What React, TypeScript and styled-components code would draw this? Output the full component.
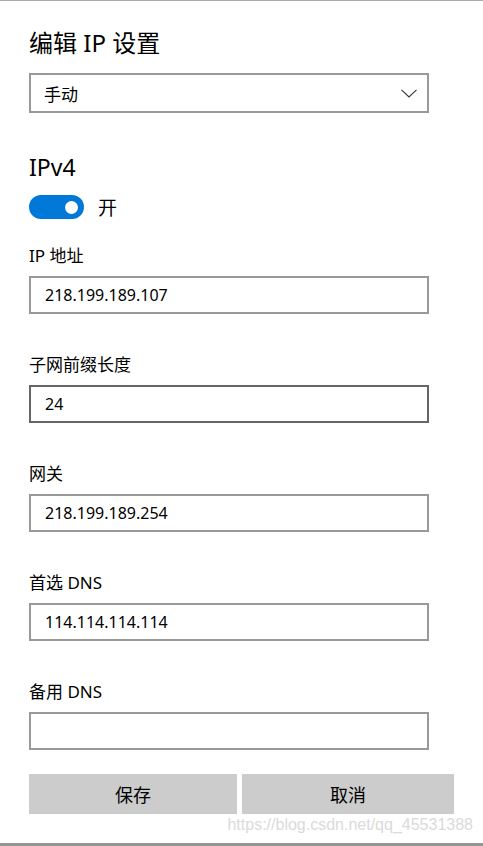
import React from 'react'
import styled, { createGlobalStyle } from 'styled-components'

const GlobalStyle = createGlobalStyle`
	html, body {
		margin: 0;
		padding: 0;
		background: #fff;
		overflow: hidden;
	}
`

const Page = styled.div`
	position: relative;
	box-sizing: border-box;
	width: 483px;
	height: 846px;
	padding: 26px 0 0 29px;
	border-top: 1px solid #ababab;
	border-bottom: 3px solid #959595;
	background: #fff;
	color: #000;
	font-family: 'Noto Sans', 'Noto Sans CJK SC', sans-serif;
`

const Title = styled.h1`
	margin: 0;
	font-size: 24px;
	line-height: 32px;
	font-weight: 400;
`

const Select = styled.div`
	display: flex;
	align-items: center;
	justify-content: space-between;
	box-sizing: border-box;
	width: 400px;
	height: 40px;
	margin-top: 14px;
	padding: 0 10px 0 13px;
	border: 2px solid #999;
	font-size: 17px;
`

const Heading = styled.h2`
	margin: 39px 0 0;
	font-size: 23px;
	line-height: 30px;
	font-weight: 400;
`

const ToggleRow = styled.div`
	display: flex;
	align-items: center;
	gap: 14px;
	height: 24px;
	margin-top: 13px;
	font-size: 19px;
`

const Toggle = styled.div<{ $on: boolean }>`
	display: flex;
	align-items: center;
	justify-content: ${(p) => (p.$on ? 'flex-end' : 'flex-start')};
	box-sizing: border-box;
	width: 55px;
	height: 24px;
	padding: 0 6px;
	border-radius: 12px;
	background: ${(p) => (p.$on ? '#0078d7' : '#fff')};
`

const Knob = styled.span`
	width: 13px;
	height: 13px;
	border-radius: 50%;
	background: #fff;
`

const Fields = styled.div`
	display: flex;
	flex-direction: column;
	gap: 39px;
	margin-top: 25px;
`

const Field = styled.div`
	display: flex;
	flex-direction: column;
	gap: 8px;
`

const Label = styled.label`
	font-size: 17px;
	line-height: 24px;
`

const Input = styled.input<{ $active?: boolean }>`
	box-sizing: border-box;
	width: 400px;
	height: 38px;
	margin: 0;
	padding: 0 14px;
	border: 2px solid ${(p) => (p.$active ? '#666' : '#999')};
	border-radius: 0;
	outline: none;
	background: #fff;
	color: #000;
	font: inherit;
	font-size: 16px;
`

const Buttons = styled.div`
	display: grid;
	grid-template-columns: 208px 212px;
	gap: 5px;
	margin-top: 24px;
`

const Button = styled.button`
	height: 40px;
	margin: 0;
	padding: 0;
	border: none;
	background: #ccc;
	color: #000;
	font: inherit;
	font-size: 18px;
`

const Watermark = styled.div`
	position: absolute;
	right: 10px;
	bottom: 9px;
	font-family: 'Liberation Sans', Arial, sans-serif;
	font-size: 16px;
	line-height: 18px;
	color: #dadada;
`

function Chevron() {
	return (
		<svg width="16" height="9" viewBox="0 0 16 9">
			<polyline points="0.5,0.8 8,8 15.5,0.8" fill="none" stroke="#333" strokeWidth="1.1" />
		</svg>
	)
}

export default function App(): React.ReactNode {
	const fields = [
		{ label: 'IP 地址', value: '218.199.189.107' },
		{ label: '子网前缀长度', value: '24', active: true },
		{ label: '网关', value: '218.199.189.254' },
		{ label: '首选 DNS', value: '114.114.114.114' },
		{ label: '备用 DNS', value: '' },
	]

	return (
		<Page>
			<GlobalStyle />
			<Title>编辑 IP 设置</Title>
			<Select>
				<span>手动</span>
				<Chevron />
			</Select>

			<Heading>IPv4</Heading>
			<ToggleRow>
				<Toggle $on>
					<Knob />
				</Toggle>
				<span>开</span>
			</ToggleRow>

			<Fields>
				{fields.map((item, index) => (
					<Field key={index}>
						<Label>{item.label}</Label>
						<Input defaultValue={item.value} readOnly $active={item.active} />
					</Field>
				))}
			</Fields>

			<Buttons>
				<Button>保存</Button>
				<Button>取消</Button>
			</Buttons>

			<Watermark>https://blog.csdn.net/qq_45531388</Watermark>
		</Page>
	)
}
